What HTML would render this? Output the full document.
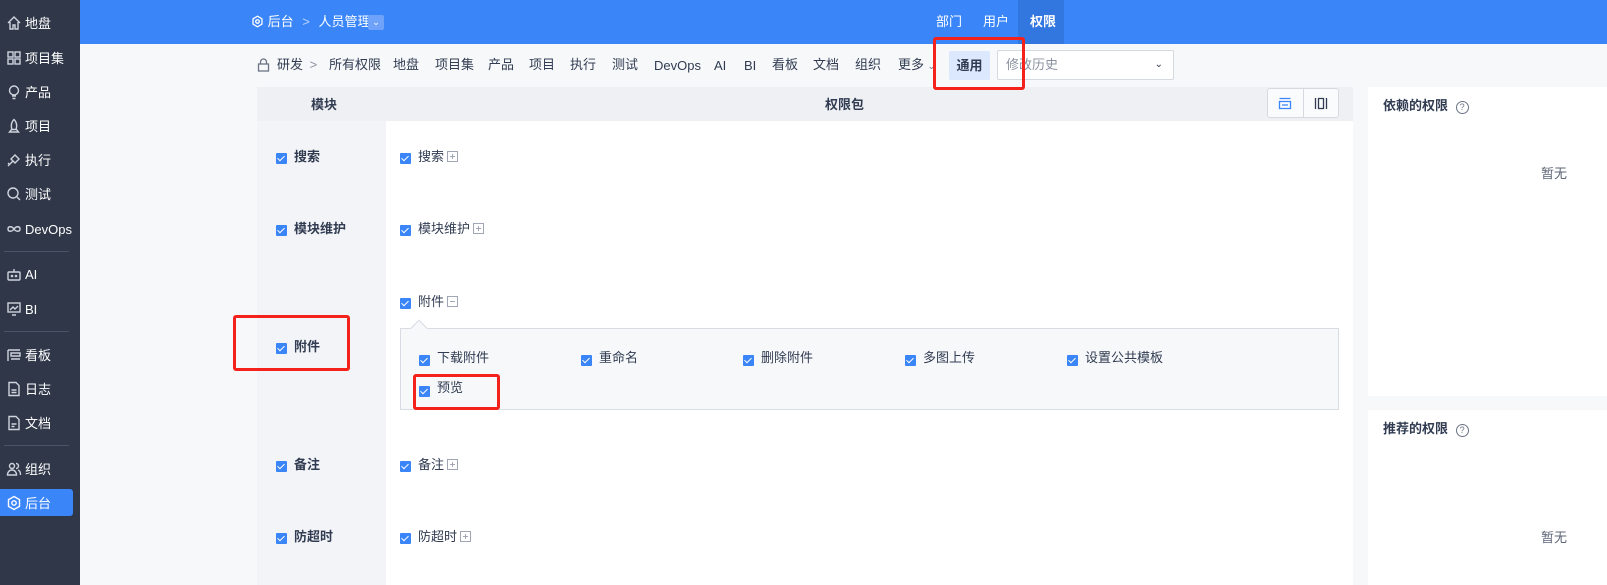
<!DOCTYPE html><html><head><meta charset="utf-8"><style>
*{margin:0;padding:0;box-sizing:border-box}
body{width:1607px;height:585px;overflow:hidden;background:#f7f8fa;font-family:"Liberation Sans","Noto Sans CJK SC",sans-serif;font-size:13px;line-height:18px;color:#313c52;position:relative}
.a{position:absolute;white-space:nowrap}
.side{left:0;top:0;width:80px;height:585px;background:#2f3749}
.si{left:6px;color:#fff;font-size:13px;line-height:16px}
.si svg{vertical-align:-3px;margin-right:3px}
.div{left:4px;width:65px;height:1px;background:#4a5266}
.top{left:80px;top:0;width:1527px;height:44px;background:#3a85f8}
.cb{position:absolute;width:11px;height:11px;background:#3a85f8;border-radius:1px}
.cb:after{content:"";position:absolute;left:3px;top:1px;width:3px;height:6px;border:solid #fff;border-width:0 1.5px 1.5px 0;transform:rotate(45deg)}
.pl{display:inline-block;width:11px;height:11px;border:1px solid #a0a6b3;vertical-align:-1px;margin-left:3px;position:relative}
.pl:before{content:"";position:absolute;left:2px;top:4px;width:5px;height:1px;background:#a0a6b3}
.pl.p:after{content:"";position:absolute;left:4px;top:2px;width:1px;height:5px;background:#a0a6b3}
.red{border:3px solid #f5221b;border-radius:3px}
.n{top:56px}
</style></head><body>
<div class="a side"></div>
<div class="a si" style="top:15px"><svg width="16" height="16" viewBox="0 0 16 16" fill="none" stroke="#cfd4dd" stroke-width="1.4"><path d="M2 8L8 2l6 6M4 7v7h3v-4h2v4h3V7"/></svg>地盘</div>
<div class="a si" style="top:50px"><svg width="16" height="16" viewBox="0 0 16 16" fill="none" stroke="#cfd4dd" stroke-width="1.4"><rect x="2" y="2" width="5" height="5"/><rect x="9" y="2" width="5" height="5"/><rect x="2" y="9" width="5" height="5"/><rect x="9" y="9" width="5" height="5"/></svg>项目集</div>
<div class="a si" style="top:84px"><svg width="16" height="16" viewBox="0 0 16 16" fill="none" stroke="#cfd4dd" stroke-width="1.4"><circle cx="8" cy="6.5" r="4.5"/><path d="M6 12h4M6.5 14.5h3"/></svg>产品</div>
<div class="a si" style="top:118px"><svg width="16" height="16" viewBox="0 0 16 16" fill="none" stroke="#cfd4dd" stroke-width="1.4"><path d="M8 1.5c3 3 3 7 2 10H6c-1-3-1-7 2-10zM6 11l-2.5 3h9L10 11"/></svg>项目</div>
<div class="a si" style="top:152px"><svg width="16" height="16" viewBox="0 0 16 16" fill="none" stroke="#cfd4dd" stroke-width="1.4"><path d="M2 14l5-5M9 3l4 4-4 4-4-4zM3 11l-1 1"/></svg>执行</div>
<div class="a si" style="top:186px"><svg width="16" height="16" viewBox="0 0 16 16" fill="none" stroke="#cfd4dd" stroke-width="1.4"><circle cx="7" cy="7" r="5"/><path d="M11 11l3 3"/></svg>测试</div>
<div class="a si" style="top:221px"><svg width="16" height="16" viewBox="0 0 16 16" fill="none" stroke="#cfd4dd" stroke-width="1.4"><path d="M8 8c-2-3-6-3-6 0s4 3 6 0 6-3 6 0-4 3-6 0"/></svg>DevOps</div>
<div class="a div" style="top:251px"></div>
<div class="a si" style="top:266px"><svg width="16" height="16" viewBox="0 0 16 16" fill="none" stroke="#cfd4dd" stroke-width="1.4"><rect x="2" y="6" width="12" height="8" rx="1"/><path d="M8 6V3"/><circle cx="6" cy="10" r=".6"/><circle cx="10" cy="10" r=".6"/></svg>AI</div>
<div class="a si" style="top:301px"><svg width="16" height="16" viewBox="0 0 16 16" fill="none" stroke="#cfd4dd" stroke-width="1.4"><rect x="2" y="2" width="12" height="9"/><path d="M4 9l3-3 2 2 3-3M6 14h4"/></svg>BI</div>
<div class="a div" style="top:331px"></div>
<div class="a si" style="top:347px"><svg width="16" height="16" viewBox="0 0 16 16" fill="none" stroke="#cfd4dd" stroke-width="1.4"><path d="M2 3h12M2 3v11M5 6h9v3H5zM5 12h9"/></svg>看板</div>
<div class="a si" style="top:381px"><svg width="16" height="16" viewBox="0 0 16 16" fill="none" stroke="#cfd4dd" stroke-width="1.4"><path d="M3 1.5h7l3 3v10H3zM5.5 9h5M5.5 11.5h5"/></svg>日志</div>
<div class="a si" style="top:415px"><svg width="16" height="16" viewBox="0 0 16 16" fill="none" stroke="#cfd4dd" stroke-width="1.4"><path d="M3 1.5h7l3 3v10H3zM5.5 9h5M5.5 11.5h3"/></svg>文档</div>
<div class="a div" style="top:445px"></div>
<div class="a si" style="top:461px"><svg width="16" height="16" viewBox="0 0 16 16" fill="none" stroke="#cfd4dd" stroke-width="1.4"><circle cx="6" cy="5" r="2.5"/><path d="M1.5 14c0-3 2-5 4.5-5s4.5 2 4.5 5zM10 2.5a2.5 2.5 0 010 5M12 9c1.5.5 2.5 2 2.5 5"/></svg>组织</div>
<div class="a" style="left:0;top:489px;width:73px;height:27px;background:#3a85f8;border-radius:0 3px 3px 0"></div>
<div class="a si" style="top:495px"><svg width="16" height="16" viewBox="0 0 16 16" fill="none" stroke="#fff" stroke-width="1.4"><path d="M8 1.5l5.5 3.2v6.6L8 14.5l-5.5-3.2V4.7z"/><circle cx="8" cy="8" r="2.2"/></svg>后台</div>

<div class="a top"></div>
<div class="a" style="left:251px;top:13px;color:#fff;font-size:13px"><svg width="13" height="13" viewBox="0 0 16 16" fill="none" stroke="#fff" stroke-width="1.6" style="vertical-align:-2px"><path d="M8 1.5l5.5 3.2v6.6L8 14.5l-5.5-3.2V4.7z"/><circle cx="8" cy="8" r="2.2"/></svg> 后台 <span style="color:#bcd4fc;margin:0 5px">&gt;</span> 人员管理</div>
<div class="a" style="left:368px;top:15px;width:16px;height:15px;background:#6ea3f9;border-radius:2px;color:#fff;font-size:9px;text-align:center;line-height:15px">&#8964;</div>
<div class="a" style="left:1018px;top:0;width:46px;height:44px;background:#3276e0"></div>
<div class="a" style="left:936px;top:13px;color:#fff">部门</div>
<div class="a" style="left:983px;top:13px;color:#fff">用户</div>
<div class="a" style="left:1030px;top:13px;color:#fff;font-weight:bold">权限</div>

<div class="a" style="left:257px;top:58px"><svg width="13" height="14" viewBox="0 0 13 14" fill="none" stroke="#6b7385" stroke-width="1.3"><rect x="1.5" y="6" width="10" height="7"/><path d="M3.5 6V4a3 3 0 016 0v2"/></svg></div>
<div class="a n" style="left:277px">研发 <span style="color:#8a91a0;margin-left:3px">&gt;</span></div>
<div class="a n" style="left:329px">所有权限</div>
<div class="a n" style="left:393px">地盘</div>
<div class="a n" style="left:435px">项目集</div>
<div class="a n" style="left:488px">产品</div>
<div class="a n" style="left:529px">项目</div>
<div class="a n" style="left:570px">执行</div>
<div class="a n" style="left:612px">测试</div>
<div class="a n" style="left:654px;top:57px">DevOps</div>
<div class="a n" style="left:714px;top:57px">AI</div>
<div class="a n" style="left:744px;top:57px">BI</div>
<div class="a n" style="left:772px">看板</div>
<div class="a n" style="left:813px">文档</div>
<div class="a n" style="left:855px">组织</div>
<div class="a n" style="left:898px">更多 <span style="font-size:9px;color:#6b7385">&#8964;</span></div>
<div class="a" style="left:949px;top:51px;width:41px;height:29px;background:#dbe8fd;border-radius:2px;text-align:center;line-height:29px;font-weight:bold">通用</div>
<div class="a" style="left:997px;top:50px;width:177px;height:30px;background:#fff;border:1px solid #d5d9e0;border-radius:2px;padding-left:8px;line-height:28px;color:#8a91a0">修改历史<span style="position:absolute;right:10px;top:0;color:#313c52;font-size:10px">&#8964;</span></div>

<div class="a" style="left:257px;top:87px;width:1096px;height:498px;background:#fff"></div>
<div class="a" style="left:257px;top:87px;width:1096px;height:34px;background:#eff0f3"></div>
<div class="a" style="left:257px;top:121px;width:129px;height:464px;background:#f3f4f7"></div>
<div class="a" style="left:311px;top:96px;font-weight:bold">模块</div>
<div class="a" style="left:825px;top:96px;font-weight:bold">权限包</div>
<div class="a" style="left:1267px;top:88px;width:72px;height:30px;background:#fafbfc;border:1px solid #d5d9e0;border-radius:3px"></div>
<div class="a" style="left:1303px;top:89px;width:1px;height:28px;background:#d5d9e0"></div>
<div class="a" style="left:1278px;top:97px"><svg width="14" height="13" viewBox="0 0 14 13" fill="none" stroke="#3a85f8" stroke-width="1.3"><path d="M1.5 1.5h11M1.5 4.5h11v7h-11zM4 8h6"/></svg></div>
<div class="a" style="left:1314px;top:97px"><svg width="14" height="13" viewBox="0 0 14 13" fill="none" stroke="#313c52" stroke-width="1.3"><path d="M1.5 1v11M12.5 1v11M4.5 1.5h5v10h-5z"/></svg></div>

<div class="cb" style="left:276px;top:153px"></div><div class="a" style="left:294px;top:148px;font-weight:bold">搜索</div>
<div class="cb" style="left:400px;top:153px"></div><div class="a" style="left:418px;top:148px">搜索<span class="pl p"></span></div>
<div class="cb" style="left:276px;top:225px"></div><div class="a" style="left:294px;top:220px;font-weight:bold">模块维护</div>
<div class="cb" style="left:400px;top:225px"></div><div class="a" style="left:418px;top:220px">模块维护<span class="pl p"></span></div>
<div class="cb" style="left:276px;top:343px"></div><div class="a" style="left:294px;top:338px;font-weight:bold">附件</div>
<div class="cb" style="left:400px;top:298px"></div><div class="a" style="left:418px;top:293px">附件<span class="pl"></span></div>
<div class="a" style="left:400px;top:328px;width:939px;height:82px;background:#f7f8fa;border:1px solid #d9dce2"></div>
<div class="a" style="left:413px;top:322px;width:12px;height:12px;background:#f7f8fa;border-left:1px solid #d9dce2;border-top:1px solid #d9dce2;transform:rotate(45deg)"></div>
<div class="cb" style="left:419px;top:355px"></div><div class="a" style="left:437px;top:349px">下载附件</div>
<div class="cb" style="left:581px;top:355px"></div><div class="a" style="left:599px;top:349px">重命名</div>
<div class="cb" style="left:743px;top:355px"></div><div class="a" style="left:761px;top:349px">删除附件</div>
<div class="cb" style="left:905px;top:355px"></div><div class="a" style="left:923px;top:349px">多图上传</div>
<div class="cb" style="left:1067px;top:355px"></div><div class="a" style="left:1085px;top:349px">设置公共模板</div>
<div class="cb" style="left:419px;top:386px"></div><div class="a" style="left:437px;top:379px">预览</div>
<div class="cb" style="left:276px;top:461px"></div><div class="a" style="left:294px;top:456px;font-weight:bold">备注</div>
<div class="cb" style="left:400px;top:461px"></div><div class="a" style="left:418px;top:456px">备注<span class="pl p"></span></div>
<div class="cb" style="left:276px;top:533px"></div><div class="a" style="left:294px;top:528px;font-weight:bold">防超时</div>
<div class="cb" style="left:400px;top:533px"></div><div class="a" style="left:418px;top:528px">防超时<span class="pl p"></span></div>

<div class="a" style="left:1368px;top:87px;width:239px;height:309px;background:#fff"></div>
<div class="a" style="left:1368px;top:410px;width:239px;height:175px;background:#fff"></div>
<div class="a" style="left:1383px;top:97px;font-weight:bold">依赖的权限 <span style="display:inline-block;width:13px;height:13px;border:1px solid #6b7385;border-radius:50%;font-size:9px;text-align:center;line-height:11px;font-weight:normal;color:#6b7385;margin-left:4px">?</span></div>
<div class="a" style="left:1383px;top:420px;font-weight:bold">推荐的权限 <span style="display:inline-block;width:13px;height:13px;border:1px solid #6b7385;border-radius:50%;font-size:9px;text-align:center;line-height:11px;font-weight:normal;color:#6b7385;margin-left:4px">?</span></div>
<div class="a" style="left:1541px;top:165px;color:#5c6475">暂无</div>
<div class="a" style="left:1541px;top:529px;color:#5c6475">暂无</div>

<div class="a red" style="left:933px;top:37px;width:92px;height:53px"></div>
<div class="a red" style="left:233px;top:315px;width:117px;height:56px"></div>
<div class="a red" style="left:413px;top:374px;width:87px;height:36px"></div>
</body></html>
